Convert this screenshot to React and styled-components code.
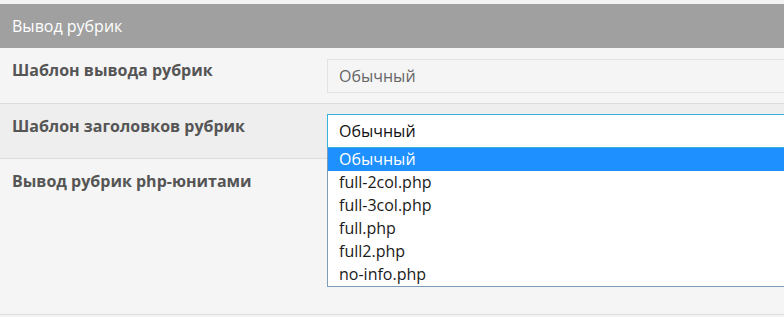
import React from "react"
import styled, { createGlobalStyle } from "styled-components"

const options = ["Обычный", "full-2col.php", "full-3col.php", "full.php", "full2.php", "no-info.php"]

const GlobalStyle = createGlobalStyle`
  html, body {
    margin: 0;
    padding: 0;
    background: #f3f3f3;
  }
  body {
    font-family: "Open Sans", "Noto Sans", sans-serif;
  }
`

const App = () => (
  <Page>
    <GlobalStyle />
    <Panel>
      <PanelHeader>Вывод рубрик</PanelHeader>
      <Row height="56px">
        <Label>Шаблон вывода рубрик</Label>
        <Select offset="11px">Обычный</Select>
      </Row>
      <Row shaded height="55px">
        <Label>Шаблон заголовков рубрик</Label>
        <SelectWrap>
          <Select open offset="10px">Обычный</Select>
          <OptionList>
            {options.map((opt, i) => (
              <Option key={opt} active={i === 0}>
                {opt}
              </Option>
            ))}
          </OptionList>
        </SelectWrap>
      </Row>
      <Row height="156px">
        <Label>Вывод рубрик php-юнитами</Label>
      </Row>
    </Panel>
  </Page>
)

const Page = styled.div`
  padding-top: 4px;
`

const Panel = styled.div`
  display: flex;
  flex-direction: column;
`

const PanelHeader = styled.div`
  height: 44px;
  display: flex;
  align-items: center;
  padding: 0 12px;
  background: #a0a0a0;
  color: #fff;
  font-size: 16px;
`

const Row = styled.div`
  display: grid;
  grid-template-columns: 327px 1fr;
  align-items: start;
  min-height: ${p => p.height};
  box-sizing: border-box;
  background: ${p => (p.shaded ? "#eeeeee" : "#f5f5f5")};
  border-bottom: 1px solid #dddddd;
`

const Label = styled.div`
  padding: 12px 0 0 12px;
  line-height: 20px;
  font-size: 16px;
  font-weight: 700;
  color: #555555;
`

const SelectWrap = styled.div`
  position: relative;
`

const Select = styled.div`
  margin-top: ${p => p.offset || "0"};
  height: 34px;
  box-sizing: border-box;
  padding: 0 11px;
  display: flex;
  align-items: center;
  font-size: 16px;
  border: 1px solid ${p => (p.open ? "#35b3dc" : "#e2e2e2")};
  border-right: none;
  background: ${p => (p.open ? "#ffffff" : "#f5f5f5")};
  color: ${p => (p.open ? "#111111" : "#666666")};
`

const OptionList = styled.div`
  position: absolute;
  top: 44px;
  left: 0;
  right: 0;
  z-index: 2;
  background: #ffffff;
  border: 1px solid #7f9db9;
  border-top: none;
  border-right: none;
`

const Option = styled.div`
  height: 23px;
  line-height: 23px;
  padding: 0 11px;
  font-size: 16px;
  color: ${p => (p.active ? "#ffffff" : "#1a1a1a")};
  background: ${p => (p.active ? "#1e90ff" : "transparent")};
`

export default App
